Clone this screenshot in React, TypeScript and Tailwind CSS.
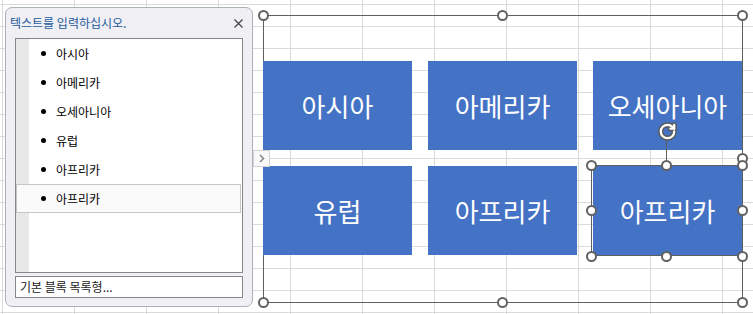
import React from 'react';

const boxes = ['아시아', '아메리카', '오세아니아', '유럽', '아프리카', '아프리카'];
const items = ['아시아', '아메리카', '오세아니아', '유럽', '아프리카', '아프리카'];

const handles = [
    // outer SmartArt frame
    'left-[258px] top-[10px]',
    'left-[497px] top-[10px]',
    'left-[737px] top-[10px]',
    'left-[258px] top-[153px]',
    'left-[737px] top-[153px]',
    'left-[258px] top-[297px]',
    'left-[497px] top-[297px]',
    'left-[737px] top-[297px]',
    // selected shape
    'left-[586px] top-[160px]',
    'left-[661px] top-[160px]',
    'left-[737px] top-[160px]',
    'left-[586px] top-[205px]',
    'left-[737px] top-[205px]',
    'left-[586px] top-[251px]',
    'left-[661px] top-[251px]',
    'left-[737px] top-[251px]',
];

const Handle: React.FC<{ className: string }> = ({ className }) => (
    <div className={`absolute w-[11px] h-[11px] rounded-full border-2 border-[#626262] bg-white ${className}`} />
);

const RotateHandle: React.FC = () => (
    <svg className="absolute left-[656px] top-[120px]" width="23" height="23" viewBox="0 0 24 24" fill="none" strokeLinecap="round" strokeLinejoin="round">
        <g stroke="#5a5a5a" strokeWidth="5.5">
            <path d="M19 12a7 7 0 1 1-7-7c2 0 3.8.8 5.2 2.1L19 9" />
            <path d="M19 5v4h-4" />
        </g>
        <g stroke="#ffffff" strokeWidth="2.4">
            <path d="M19 12a7 7 0 1 1-7-7c2 0 3.8.8 5.2 2.1L19 9" />
            <path d="M19 5v4h-4" />
        </g>
    </svg>
);

const TextPane: React.FC = () => (
    <div className="absolute left-[5px] top-[7px] w-[248px] h-[300px] rounded-[7px] border border-[#a9b2b7] bg-[#efeff4] flex flex-col px-[9px] font-['Noto_Sans_CJK_KR',sans-serif]">
        <div className="h-[30px] flex items-center justify-between -mx-[5px] pr-[2px]">
            <span className="text-[12px] text-[#24599b] leading-none">텍스트를 입력하십시오.</span>
            <svg width="9" height="9" viewBox="0 0 9 9" className="mr-[3px]">
                <path d="M0.5 0.5 L8.5 8.5 M8.5 0.5 L0.5 8.5" stroke="#444" strokeWidth="1.2" />
            </svg>
        </div>
        <div className="h-[235px] border border-[#868686] bg-white flex flex-col">
            {items.map((item, i) => {
                const selected = i === items.length - 1;
                return (
                    <div
                        key={i}
                        className={`h-[29px] flex items-center ${selected ? 'border border-[#c6c6c6] bg-[#fafafa] mr-[1px]' : ''}`}
                    >
                        <div className={`w-[13px] self-stretch ${selected ? '' : 'bg-[#e8e8e8]'}`} />
                        <span className={`w-[5px] h-[5px] rounded-full bg-black ${selected ? 'ml-[11px]' : 'ml-[12px]'}`} />
                        <span className="ml-[10px] text-[12px] text-black leading-none">{item}</span>
                    </div>
                );
            })}
            <div className="flex-1 flex">
                <div className="w-[13px] bg-[#e8e8e8]" />
            </div>
        </div>
        <div className="mt-[3px] h-[22px] border border-[#868686] bg-white flex items-center pl-[4px]">
            <span className="text-[12px] text-[#222] leading-none">기본 블록 목록형...</span>
        </div>
    </div>
);

export default function App() {
    return (
        <div className="relative w-[753px] h-[314px] overflow-hidden bg-white bg-[linear-gradient(to_right,#dadada_1px,transparent_1px),linear-gradient(to_bottom,#dadada_1px,transparent_1px)] bg-[size:72px_22px] bg-[position:2px_4px]">
            {/* SmartArt frame */}
            <div className="absolute left-[263px] top-[15px] w-[480px] h-[288px]">
                <div className="absolute inset-0 border border-[#5f5f5f]" />
                <div className="relative grid grid-cols-[149px_149px_149px] gap-[16px] pt-[46px]">
                    {boxes.map((label, i) => (
                        <div
                            key={i}
                            className="relative h-[89px] bg-[#4472c4] flex items-center justify-center text-white text-[26px] leading-none font-['Noto_Sans_CJK_KR',sans-serif]"
                        >
                            {label}
                            {i === boxes.length - 1 && (
                                <div className="absolute -left-[2px] -top-[1px] -right-[1px] -bottom-[1px] border border-[#5f5f5f]" />
                            )}
                        </div>
                    ))}
                </div>
            </div>

            <div className="absolute left-[666px] top-[138px] w-px h-[23px] bg-[#5f5f5f]" />
            <RotateHandle />
            {handles.map((h) => (
                <Handle key={h} className={h} />
            ))}

            <TextPane />

            {/* expand tab */}
            <div className="absolute left-[253px] top-[150px] w-[17px] h-[17px] bg-[#f8f8f8] border border-[#d2d2d2] flex items-center justify-center">
                <svg width="6" height="9" viewBox="0 0 6 9">
                    <path d="M1 1 L4.5 4.5 L1 8" stroke="#8a8a8a" strokeWidth="1.6" fill="none" />
                </svg>
            </div>
        </div>
    );
}
